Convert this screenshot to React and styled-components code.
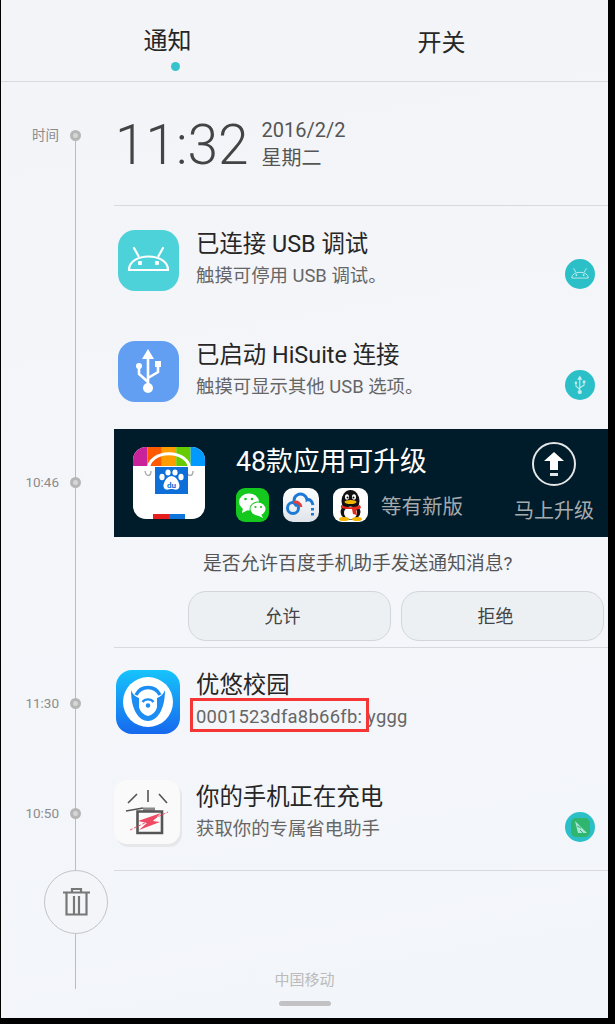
import styled, { createGlobalStyle } from "styled-components";

const GlobalStyle = createGlobalStyle`
  html, body {
    margin: 0;
    padding: 0;
    background: #000;
    overflow: hidden;
  }
  * {
    box-sizing: border-box;
  }
`;

const Screen = styled.div`
  width: 607px;
  height: 1018px;
  margin-left: 1px;
  display: flex;
  flex-direction: column;
  overflow: hidden;
  background: linear-gradient(170deg, #f2f4f8 0%, #f4f6fa 55%, #f2f5f9 100%);
  color: #222;
  font-family: Roboto, "Noto Sans CJK SC", sans-serif;
`;

const Tabs = styled.div`
  height: 82px;
  flex: none;
  display: grid;
  grid-template-columns: 274px 274px;
  justify-content: center;
  border-bottom: 1px solid #d8d9df;
`;

const Tab = styled.div`
  position: relative;
  padding-top: ${(p) => p.$top}px;
  text-align: center;
  font-size: 24px;
  line-height: 34px;
  color: #262626;
`;

const TabDot = styled.span`
  position: absolute;
  top: 62px;
  left: 140px;
  width: 9px;
  height: 9px;
  border-radius: 50%;
  background: #36c3cb;
`;

const Body = styled.div`
  position: relative;
  flex: 1;
  display: flex;
  flex-direction: column;
`;

const RailLine = styled.div`
  position: absolute;
  top: 53px;
  left: 74px;
  width: 1px;
  height: 854px;
  background: #bcbcbc;
`;

const Row = styled.div`
  position: relative;
  display: grid;
  grid-template-columns: 113px 1fr;
`;

const RailCell = styled.div`
  padding-top: ${(p) => p.$top || 0}px;
`;

const TimeMark = styled.div`
  display: flex;
  align-items: center;
  height: 16px;
`;

const TimeLabel = styled.span`
  width: 58px;
  text-align: right;
  font-size: 13.5px;
  line-height: 16px;
  color: #8b8b8b;
`;

const TimeDot = styled.span`
  width: 11px;
  height: 11px;
  margin-left: 11px;
  border-radius: 50%;
  border: 3px solid #b6b6b6;
  background: #d6d6d6;
`;

const ClockContent = styled.div`
  height: 124px;
  display: flex;
  align-items: flex-start;
  padding: 33px 0 0 1px;
  border-bottom: 1px solid #d8d9df;
`;

const ClockTime = styled.div`
  font-size: 55px;
  font-weight: 300;
  line-height: 60px;
  color: #444;
`;

const ClockDate = styled.div`
  margin: 1px 0 0 13px;
  font-size: 20px;
  line-height: 28px;
  color: #555;
`;

const Notice = styled.div`
  height: ${(p) => p.$height || 111}px;
  display: flex;
  align-items: flex-start;
  ${(p) => p.$divider && "border-bottom: 1px solid #d8d9df;"}
`;

const IconSlot = styled.div`
  width: 68px;
  height: 108px;
  flex: none;
  display: flex;
  align-items: center;
  justify-content: center;
`;

const NoticeText = styled.div`
  flex: 1;
  padding: ${(p) => (p.$tight ? 22 : 23)}px 0 0 14px;
`;

const NoticeTitle = styled.div`
  font-size: 23.4px;
  line-height: 31px;
  color: #262626;
`;

const NoticeSub = styled.div`
  position: relative;
  font-size: 18.4px;
  line-height: 32px;
  letter-spacing: ${(p) => (p.$wide ? "0.27px" : "0")};
  color: #666;
`;

const Highlight = styled.span`
  position: absolute;
  top: -3px;
  left: -6px;
  width: 179px;
  height: 34px;
  border: 3px solid #f63535;
`;

const Badge = styled.div`
  width: 30px;
  height: 30px;
  flex: none;
  margin: 53px 13px 0 0;
  border-radius: 50%;
  background: #2bc0c8;
  display: flex;
  align-items: center;
  justify-content: center;
`;

const BadgeSquare = styled.div`
  width: 19px;
  height: 19px;
  border-radius: 5px;
  background: #2fb56e;
  display: flex;
  align-items: center;
  justify-content: center;
`;

const Banner = styled.div`
  height: 108px;
  display: flex;
  align-items: flex-start;
  background: #001b29;
`;

const BannerIcon = styled.div`
  flex: none;
  margin: 18px 31px 0 19px;
  height: 72px;
`;

const BannerInfo = styled.div`
  flex: 1;
  padding-top: 15px;
`;

const BannerTitle = styled.div`
  font-size: 26.8px;
  line-height: 36px;
  color: #fff;
`;

const BannerApps = styled.div`
  display: flex;
  align-items: center;
  margin-top: 8px;
`;

const AppIcon = styled.div`
  flex: none;
  height: 34px;
  margin-right: ${(p) => p.$gap}px;
`;

const BannerNote = styled.span`
  font-size: 20.5px;
  color: #a3a9ad;
`;

const BannerAction = styled.div`
  width: 82px;
  flex: none;
  margin-right: 13px;
  padding-top: 13px;
  display: flex;
  flex-direction: column;
  align-items: center;
`;

const ActionLabel = styled.div`
  margin-top: 10px;
  font-size: 20px;
  line-height: 30px;
  white-space: nowrap;
  color: #a6abae;
`;

const Prompt = styled.div`
  height: 54px;
  padding: 14px 0 0 89px;
  font-size: 18.8px;
  line-height: 26px;
  color: #555;
`;

const ButtonRow = styled.div`
  display: flex;
  gap: 10px;
  padding: 0 0 6px 74px;
  border-bottom: 1px solid #d8d9df;
`;

const ActionButton = styled.button`
  width: 203px;
  height: 50px;
  padding: 0 14px 2px 0;
  border: 1px solid #d2d5d9;
  border-radius: 18px;
  background: #edf0f3;
  font-family: inherit;
  font-size: 18px;
  color: #444;
`;

const Footer = styled.div`
  position: relative;
  flex: 1;
  display: flex;
  flex-direction: column;
`;

const TrashButton = styled.div`
  width: 64px;
  height: 64px;
  margin: -1px 0 0 43px;
  flex: none;
  border-radius: 50%;
  border: 1px solid #c3c4c6;
  background: #f3f5f9;
  display: flex;
  align-items: center;
  justify-content: center;
`;

const Carrier = styled.div`
  align-self: center;
  margin-top: 36px;
  font-size: 15px;
  line-height: 20px;
  color: #bbb;
`;

const HomeHandle = styled.div`
  align-self: center;
  width: 52px;
  height: 5px;
  margin-top: 11px;
  border-radius: 3px;
  background: #c2c2c4;
`;

const AndroidGlyph = ({ size, color, bg }) => (
  <svg width={size} height={size} viewBox="0 0 61 61">
    {bg && <rect width="61" height="61" rx="17" fill={bg} />}
    <path d="M11 40 C11 22 50 22 50 40 Z" fill="none" stroke={color} strokeWidth="2.2" />
    <path d="M16 18 L20.5 26 M45 18 L40.5 26" stroke={color} strokeWidth="2.2" strokeLinecap="round" />
    <rect x="20" y="31" width="4" height="4" rx="1" fill={color} />
    <rect x="37" y="31" width="4" height="4" rx="1" fill={color} />
  </svg>
);

const UsbGlyph = ({ size, color, bg }) => (
  <svg width={size} height={size} viewBox="0 0 61 61">
    {bg && <rect width="61" height="61" rx="17" fill={bg} />}
    <path d="M30 8 L36 18 H24 Z" fill={color} />
    <path
      d="M30 16 V47 M21 26 V33 L30 41 M40 24 V31 L30 37"
      fill="none"
      stroke={color}
      strokeWidth="2.6"
    />
    <circle cx="30" cy="47" r="5" fill={color} />
    <circle cx="21" cy="25" r="3" fill={color} />
    <rect x="37" y="20" width="6" height="6" fill={color} />
  </svg>
);

const StoreIcon = () => (
  <svg width="72" height="72" viewBox="0 0 72 72">
    <defs>
      <clipPath id="storeClip">
        <rect width="72" height="72" rx="13" />
      </clipPath>
    </defs>
    <g clipPath="url(#storeClip)">
      <rect width="72" height="72" fill="#fff" />
      <rect width="14.4" height="19" fill="#c8239a" />
      <rect x="14.4" width="14.4" height="19" fill="#ff5a00" />
      <rect x="28.8" width="14.4" height="19" fill="#ff9c00" />
      <rect x="43.2" width="14.4" height="19" fill="#66cc00" />
      <rect x="57.6" width="14.4" height="19" fill="#0099ff" />
      <rect x="20" y="67" width="16" height="5" fill="#e61e1e" />
      <rect x="36" y="67" width="16" height="5" fill="#0f74dc" />
    </g>
    <path d="M15 24 C15 1 57 1 57 24" fill="none" stroke="#fff" strokeWidth="3" />
    <path d="M12 24 C13 30 18 30 18 24 M54 24 C54 30 60 30 60 24" fill="none" stroke="#aaa" strokeWidth="1.4" />
    <rect x="22" y="20" width="33" height="27" fill="#0e6fd8" />
    <ellipse cx="29" cy="30" rx="2.6" ry="3.2" fill="#fff" />
    <ellipse cx="35" cy="25.5" rx="2.6" ry="3" fill="#fff" />
    <ellipse cx="42" cy="25.5" rx="2.6" ry="3" fill="#fff" />
    <ellipse cx="48" cy="30" rx="2.6" ry="3.2" fill="#fff" />
    <path d="M38.5 29 C44 29 48 38 46 41 C44 44 41 42 38.5 42 C36 42 33 44 31 41 C29 38 33 29 38.5 29 Z" fill="#fff" />
    <text x="38.5" y="41" textAnchor="middle" fontSize="8" fontWeight="700" fontFamily="Roboto, sans-serif" fill="#0e6fd8">
      du
    </text>
  </svg>
);

const WechatIcon = () => (
  <svg width="33" height="34" viewBox="0 0 33 34">
    <rect width="33" height="34" rx="9" fill="#14c81e" />
    <ellipse cx="13" cy="14" rx="10" ry="8.5" fill="#fff" />
    <path d="M7 20 L6 25 L12 22 Z" fill="#fff" />
    <circle cx="9.5" cy="11" r="1.3" fill="#14c81e" />
    <circle cx="16" cy="11" r="1.3" fill="#14c81e" />
    <ellipse cx="22" cy="21" rx="8.5" ry="7.5" fill="#14c81e" />
    <ellipse cx="22" cy="21" rx="7.5" ry="6.5" fill="#fff" />
    <path d="M25 26 L27 30 L21 27 Z" fill="#fff" />
    <circle cx="19.5" cy="19" r="1.1" fill="#14c81e" />
    <circle cx="25" cy="19" r="1.1" fill="#14c81e" />
  </svg>
);

const CloudIcon = () => (
  <svg width="36" height="34" viewBox="0 0 36 34">
    <defs>
      <linearGradient id="cloudBg" x1="0" y1="0" x2="0" y2="1">
        <stop offset="0" stopColor="#ffffff" />
        <stop offset="1" stopColor="#dfe4ea" />
      </linearGradient>
    </defs>
    <rect width="36" height="34" rx="10" fill="url(#cloudBg)" />
    <circle cx="10" cy="20" r="5.5" fill="none" stroke="#1c7ad6" strokeWidth="3" />
    <path d="M14 18 A6.5 6.5 0 1 1 24 12 C26 11 29 12 30 17" fill="none" stroke="#1c7ad6" strokeWidth="3" />
    <path d="M11 14.5 C14 13 17 15 18 19" fill="none" stroke="#e2403a" strokeWidth="3" />
    <rect x="28" y="20" width="3" height="2.5" fill="#1c7ad6" />
    <rect x="28" y="25" width="3" height="2.5" fill="#1c7ad6" />
  </svg>
);

const QQIcon = () => (
  <svg width="35" height="34" viewBox="0 0 35 34">
    <rect width="35" height="34" rx="9" fill="#fff" />
    <ellipse cx="17.5" cy="13" rx="9" ry="11" fill="#111" />
    <ellipse cx="17.5" cy="24" rx="10" ry="8" fill="#111" />
    <ellipse cx="17.5" cy="25" rx="6.5" ry="6.5" fill="#fff" />
    <ellipse cx="14" cy="9" rx="2" ry="2.8" fill="#fff" />
    <ellipse cx="21" cy="9" rx="2" ry="2.8" fill="#fff" />
    <circle cx="14.5" cy="9.5" r="1" fill="#111" />
    <circle cx="20.5" cy="9.5" r="1" fill="#111" />
    <ellipse cx="17.5" cy="14" rx="6" ry="2" fill="#f4b400" />
    <path d="M8 17 C14 20 21 20 27 17 L28 20 L23 22 L24 27 L20 26 L19 21 C15 21 11 21 8 20 Z" fill="#e5281c" />
    <ellipse cx="11" cy="31" rx="5" ry="2" fill="#f4b400" />
    <ellipse cx="24" cy="31" rx="5" ry="2" fill="#f4b400" />
  </svg>
);

const UpgradeIcon = () => (
  <svg width="44" height="44" viewBox="0 0 44 44">
    <circle cx="22" cy="22" r="21" fill="none" stroke="#e4e6e7" strokeWidth="2" />
    <path d="M22 10 L32 19 H26 V28 H18 V19 H12 Z" fill="#fff" />
    <rect x="18" y="31" width="8" height="3" fill="#e4e6e7" />
  </svg>
);

const CampusIcon = () => (
  <svg width="64" height="64" viewBox="0 0 64 64">
    <defs>
      <linearGradient id="campusBg" x1="0" y1="0" x2="0" y2="1">
        <stop offset="0" stopColor="#16c4fb" />
        <stop offset="1" stopColor="#1668ee" />
      </linearGradient>
    </defs>
    <rect width="64" height="64" rx="16" fill="url(#campusBg)" />
    <circle cx="32" cy="32" r="25" fill="#fff" />
    <path d="M15 20 C15 40 23 51 32 51 C41 51 49 40 49 20 C47 25 44 27 41 28 L23 28 C20 27 17 25 15 20 Z" fill="#1c8df2" />
    <path d="M20 25 C25 15 39 15 44 25" fill="none" stroke="#1c8df2" strokeWidth="3.4" />
    <path d="M23 28 C27 22 37 22 41 28 L41 37 C40 42 36 45 32 46 C28 45 24 42 23 37 Z" fill="#fff" />
    <path d="M26.5 32 C29 28.5 35 28.5 37.5 32" fill="none" stroke="#1c8df2" strokeWidth="2.2" />
    <circle cx="32" cy="35.5" r="2.2" fill="#1c8df2" />
  </svg>
);

const ChargeIcon = () => (
  <svg width="68" height="67" viewBox="0 0 68 67">
    <rect x="2" y="3" width="66" height="64" rx="13" fill="#e6e7e8" />
    <rect width="66" height="64" rx="13" fill="#fafafa" />
    <path d="M14 23 L23 14 M34 10 V22 M45 14 L53 23 M12 31 L29 28" stroke="#555" strokeWidth="1.6" fill="none" />
    <rect x="29" y="27.5" width="12" height="4" fill="#8a8a8a" />
    <path d="M23.5 31.5 H48 V53 H23.5 Z" fill="none" stroke="#555" strokeWidth="2.6" />
    <path d="M16 50 L54 32" stroke="#ee5b6e" strokeWidth="1" strokeDasharray="3 1.5" />
    <path d="M24 41 L47 33 L39 41 L46 42 L25 50 L33 43 Z" fill="#ee4a63" />
  </svg>
);

const TrashIcon = () => (
  <svg width="27" height="28" viewBox="0 0 27 28">
    <path
      d="M0 4.5 H27 M9 4 V1 H18 V4 M3.5 5 V26.5 H23.5 V5 M11 8 V26 M16 8 V26"
      fill="none"
      stroke="#777"
      strokeWidth="2.2"
    />
  </svg>
);

const SignalGlyph = () => (
  <svg width="15" height="15" viewBox="0 0 15 15">
    <path d="M2 1 L14 13 L5 13 Z" fill="#a9e6d8" />
    <path d="M7 10 L10 13 M4 6 L8 8" stroke="#2fb56e" strokeWidth="1" />
  </svg>
);

export default function App() {
  return (
    <Screen>
      <GlobalStyle />
      <Tabs>
        <Tab $top={24}>
          通知
          <TabDot />
        </Tab>
        <Tab $top={26}>开关</Tab>
      </Tabs>
      <Body>
        <RailLine />
        <Row>
          <RailCell $top={45}>
            <TimeMark>
              <TimeLabel>时间</TimeLabel>
              <TimeDot />
            </TimeMark>
          </RailCell>
          <ClockContent>
            <ClockTime>11:32</ClockTime>
            <ClockDate>
              <div>2016/2/2</div>
              <div>星期二</div>
            </ClockDate>
          </ClockContent>
        </Row>
        <Row>
          <RailCell />
          <Notice>
            <IconSlot>
              <AndroidGlyph size={61} color="#fff" bg="#4dd2da" />
            </IconSlot>
            <NoticeText>
              <NoticeTitle>已连接 USB 调试</NoticeTitle>
              <NoticeSub>触摸可停用 USB 调试。</NoticeSub>
            </NoticeText>
            <Badge>
              <AndroidGlyph size={26} color="#c3ecee" />
            </Badge>
          </Notice>
        </Row>
        <Row>
          <RailCell />
          <Notice $height={112}>
            <IconSlot>
              <UsbGlyph size={61} color="#fff" bg="#629ff3" />
            </IconSlot>
            <NoticeText>
              <NoticeTitle>已启动 HiSuite 连接</NoticeTitle>
              <NoticeSub>触摸可显示其他 USB 选项。</NoticeSub>
            </NoticeText>
            <Badge>
              <UsbGlyph size={26} color="#c3ecee" />
            </Badge>
          </Notice>
        </Row>
        <Row>
          <RailCell $top={45}>
            <TimeMark>
              <TimeLabel>10:46</TimeLabel>
              <TimeDot />
            </TimeMark>
          </RailCell>
          <div>
            <Banner>
              <BannerIcon>
                <StoreIcon />
              </BannerIcon>
              <BannerInfo>
                <BannerTitle>48款应用可升级</BannerTitle>
                <BannerApps>
                  <AppIcon $gap={14}>
                    <WechatIcon />
                  </AppIcon>
                  <AppIcon $gap={14}>
                    <CloudIcon />
                  </AppIcon>
                  <AppIcon $gap={13}>
                    <QQIcon />
                  </AppIcon>
                  <BannerNote>等有新版</BannerNote>
                </BannerApps>
              </BannerInfo>
              <BannerAction>
                <UpgradeIcon />
                <ActionLabel>马上升级</ActionLabel>
              </BannerAction>
            </Banner>
            <Prompt>是否允许百度手机助手发送通知消息?</Prompt>
            <ButtonRow>
              <ActionButton>允许</ActionButton>
              <ActionButton>拒绝</ActionButton>
            </ButtonRow>
          </div>
        </Row>
        <Row>
          <RailCell $top={47}>
            <TimeMark>
              <TimeLabel>11:30</TimeLabel>
              <TimeDot />
            </TimeMark>
          </RailCell>
          <Notice>
            <IconSlot>
              <CampusIcon />
            </IconSlot>
            <NoticeText $tight>
              <NoticeTitle>优悠校园</NoticeTitle>
              <NoticeSub $wide>
                0001523dfa8b66fb: yggg
                <Highlight />
              </NoticeSub>
            </NoticeText>
          </Notice>
        </Row>
        <Row>
          <RailCell $top={46}>
            <TimeMark>
              <TimeLabel>10:50</TimeLabel>
              <TimeDot />
            </TimeMark>
          </RailCell>
          <Notice $height={112} $divider>
            <IconSlot>
              <ChargeIcon />
            </IconSlot>
            <NoticeText>
              <NoticeTitle>你的手机正在充电</NoticeTitle>
              <NoticeSub>获取你的专属省电助手</NoticeSub>
            </NoticeText>
            <Badge>
              <BadgeSquare>
                <SignalGlyph />
              </BadgeSquare>
            </Badge>
          </Notice>
        </Row>
        <Footer>
          <TrashButton>
            <TrashIcon />
          </TrashButton>
          <Carrier>中国移动</Carrier>
          <HomeHandle />
        </Footer>
      </Body>
    </Screen>
  );
}
